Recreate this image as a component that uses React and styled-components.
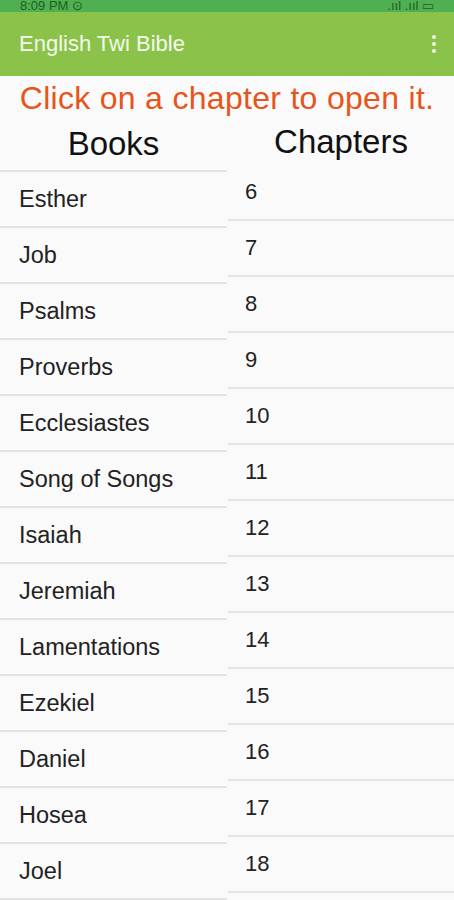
import React from "react";
import styled, { createGlobalStyle } from "styled-components";

const GlobalStyle = createGlobalStyle`
  body {
    margin: 0;
    background-color: #fafafa;
    font-family: "Liberation Sans", Arial, sans-serif;
    overflow: hidden;
  }
`;

const Screen = styled.div`
  width: 454px;
  height: 900px;
  overflow: hidden;
  background-color: #fafafa;
`;

const StatusBar = styled.div`
  height: 12px;
  background-color: #4fb052;
  display: flex;
  align-items: flex-end;
  justify-content: space-between;
  padding: 0 20px;
  overflow: hidden;
  color: #1f5e22;
  font-size: 13px;
  line-height: 12px;
`;

const AppBar = styled.div`
  height: 64px;
  background-color: #8bc34a;
  display: flex;
  align-items: center;
  justify-content: space-between;
  padding: 0 18px 0 19px;
`;

const Title = styled.div`
  color: #f4f9ee;
  font-size: 22px;
`;

const MenuDots = styled.div`
  display: flex;
  flex-direction: column;
  gap: 3px;
  span {
    width: 4px;
    height: 4px;
    border-radius: 50%;
    background-color: #f4f9ee;
  }
`;

const Hint = styled.div`
  height: 42px;
  color: #e8541a;
  font-size: 32px;
  letter-spacing: 0.3px;
  text-align: center;
  padding-top: 4px;
  box-sizing: border-box;
  white-space: nowrap;
`;

const Columns = styled.div`
  display: grid;
  grid-template-columns: 227px 1fr;
  column-gap: 1px;
`;

const Column = styled.div`
  display: flex;
  flex-direction: column;
`;

const Heading = styled.div`
  height: ${(p) => p.$height}px;
  display: flex;
  align-items: center;
  justify-content: center;
  font-size: 33px;
  color: #111;
  border-bottom: ${(p) => (p.$line ? "2px solid #e4e4e4" : "none")};
  box-sizing: border-box;
`;

const Row = styled.div`
  height: 56px;
  display: flex;
  align-items: center;
  padding-left: ${(p) => p.$indent}px;
  font-size: ${(p) => p.$size}px;
  color: #222;
  border-bottom: 2px solid #e4e4e4;
  box-sizing: border-box;
  flex-shrink: 0;
`;

const books = [
  "Esther",
  "Job",
  "Psalms",
  "Proverbs",
  "Ecclesiastes",
  "Song of Songs",
  "Isaiah",
  "Jeremiah",
  "Lamentations",
  "Ezekiel",
  "Daniel",
  "Hosea",
  "Joel",
];

const chapters = [6, 7, 8, 9, 10, 11, 12, 13, 14, 15, 16, 17, 18];

export default function App() {
  return (
    <Screen>
      <GlobalStyle />
      <StatusBar>
        <span>8:09 PM ⊙</span>
        <span>.ııl .ııl ▭</span>
      </StatusBar>
      <AppBar>
        <Title>English Twi Bible</Title>
        <MenuDots>
          <span />
          <span />
          <span />
        </MenuDots>
      </AppBar>
      <Hint>Click on a chapter to open it.</Hint>
      <Columns>
        <Column>
          <Heading $height={54} $line>
            Books
          </Heading>
          {books.map((b) => (
            <Row key={b} $indent={19} $size={23.5}>
              {b}
            </Row>
          ))}
        </Column>
        <Column>
          <Heading $height={47}>Chapters</Heading>
          {chapters.map((c) => (
            <Row key={c} $indent={17} $size={22}>
              {c}
            </Row>
          ))}
        </Column>
      </Columns>
    </Screen>
  );
}
